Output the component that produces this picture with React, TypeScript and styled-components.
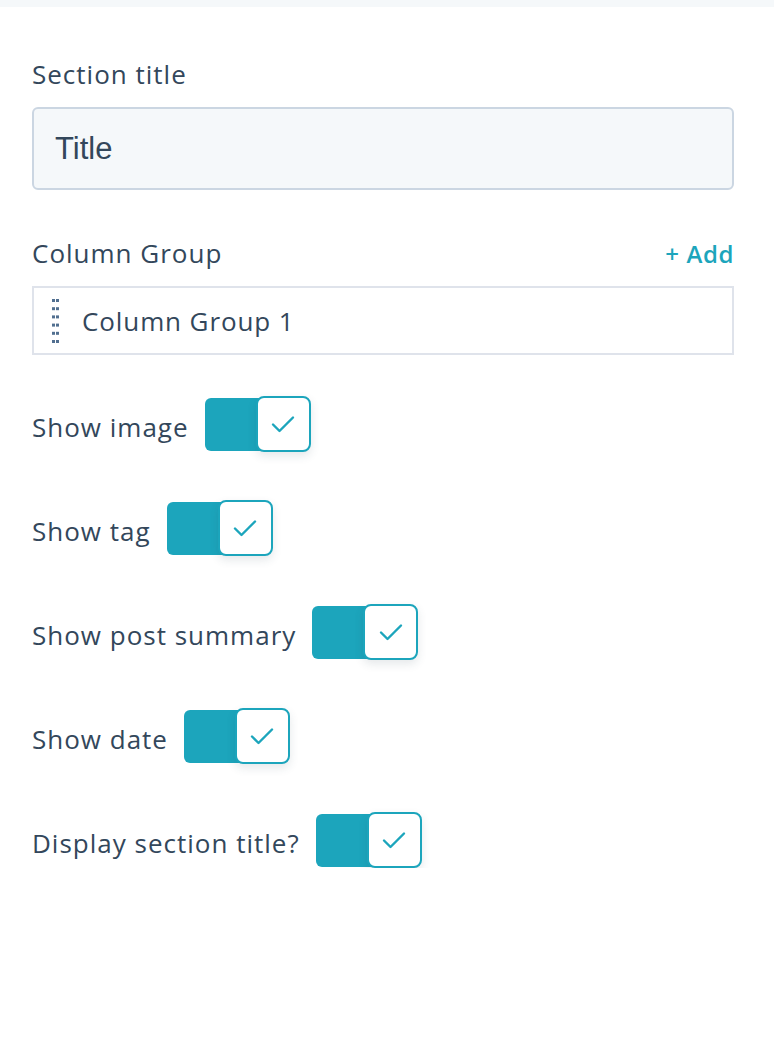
import React from "react";
import styled, { createGlobalStyle } from "styled-components";

const GlobalStyle = createGlobalStyle`
  body {
    margin: 0;
    background: #ffffff;
    font-family: "Open Sans", Lato, sans-serif;
    color: #33475b;
  }
`;

const TopBar = styled.div`
  height: 7px;
  background: #f5f8fa;
`;

const Panel = styled.div`
  width: 702px;
  padding: 48px 40px 0 32px;
  display: flex;
  flex-direction: column;
`;

const Label = styled.div`
  font-size: 26px;
  font-weight: 500;
  line-height: 38px;
  letter-spacing: 1px;
  color: #33475b;
`;

const LabelRow = styled.div`
  display: flex;
  justify-content: space-between;
  align-items: baseline;
  margin-top: 44px;
`;

const AddLink = styled.a`
  font-size: 24px;
  font-weight: 600;
  letter-spacing: 0.6px;
  color: #1ca5bc;
  text-decoration: none;
  cursor: pointer;
`;

const TextInput = styled.input`
  box-sizing: border-box;
  width: 100%;
  height: 83px;
  margin-top: 14px;
  padding: 0 21px;
  background: #f5f8fa;
  border: 2px solid #cbd6e2;
  border-radius: 6px;
  font-family: "Liberation Sans", Arial, sans-serif;
  font-size: 31px;
  color: #33475b;
  outline: none;
`;

const GroupItem = styled.div`
  box-sizing: border-box;
  height: 69px;
  margin-top: 14px;
  border: 2px solid #dfe3eb;
  display: flex;
  align-items: center;
  padding-left: 18px;
  gap: 23px;
  font-size: 26px;
  font-weight: 500;
  letter-spacing: 0.9px;
  color: #33475b;
`;

const ToggleList = styled.div`
  display: flex;
  flex-direction: column;
  gap: 48px;
  margin-top: 41px;
`;

const ToggleRow = styled.label`
  display: flex;
  align-items: center;
  gap: 16px;
  cursor: pointer;
`;

const ToggleText = styled.span`
  font-size: 26px;
  font-weight: 500;
  letter-spacing: 1px;
  color: #33475b;
  position: relative;
  top: 3px;
`;

const Toggle = styled.span`
  position: relative;
  display: inline-flex;
  width: 106px;
  height: 56px;
  align-items: center;
`;

const Track = styled.span`
  width: 100px;
  height: 53px;
  background: #1ca5bc;
  border-radius: 6px;
`;

const Knob = styled.span`
  position: absolute;
  right: 0;
  top: 0;
  box-sizing: border-box;
  width: 55px;
  height: 56px;
  background: #ffffff;
  border: 2px solid #1ca5bc;
  border-radius: 8px;
  box-shadow: 0 4px 10px rgba(45, 62, 80, 0.12);
  display: flex;
  align-items: center;
  justify-content: center;
`;

const Grip = () => (
  <svg width="7" height="44" viewBox="0 0 7 44">
    {[0, 1, 2, 3, 4, 5].map((r) => (
      <g key={r} fill="#516f90">
        <rect x="0" y={r * 8.2} width="3" height="3" />
        <rect x="4" y={r * 8.2} width="3" height="3" />
      </g>
    ))}
  </svg>
);

const Check = () => (
  <svg width="24" height="18" viewBox="0 0 24 18">
    <path
      d="M2 9.5 L8.5 16 L22 2.5"
      fill="none"
      stroke="#1ca5bc"
      strokeWidth="2.4"
      strokeLinecap="round"
      strokeLinejoin="round"
    />
  </svg>
);

const toggles = [
  "Show image",
  "Show tag",
  "Show post summary",
  "Show date",
  "Display section title?",
];

export default function App() {
  return (
    <>
      <GlobalStyle />
      <TopBar />
      <Panel>
        <Label>Section title</Label>
        <TextInput defaultValue="Title" />
        <LabelRow>
          <Label>Column Group</Label>
          <AddLink>+ Add</AddLink>
        </LabelRow>
        <GroupItem>
          <Grip />
          <span>Column Group 1</span>
        </GroupItem>
        <ToggleList>
          {toggles.map((t) => (
            <ToggleRow key={t}>
              <ToggleText>{t}</ToggleText>
              <Toggle>
                <Track />
                <Knob>
                  <Check />
                </Knob>
              </Toggle>
            </ToggleRow>
          ))}
        </ToggleList>
      </Panel>
    </>
  );
}
